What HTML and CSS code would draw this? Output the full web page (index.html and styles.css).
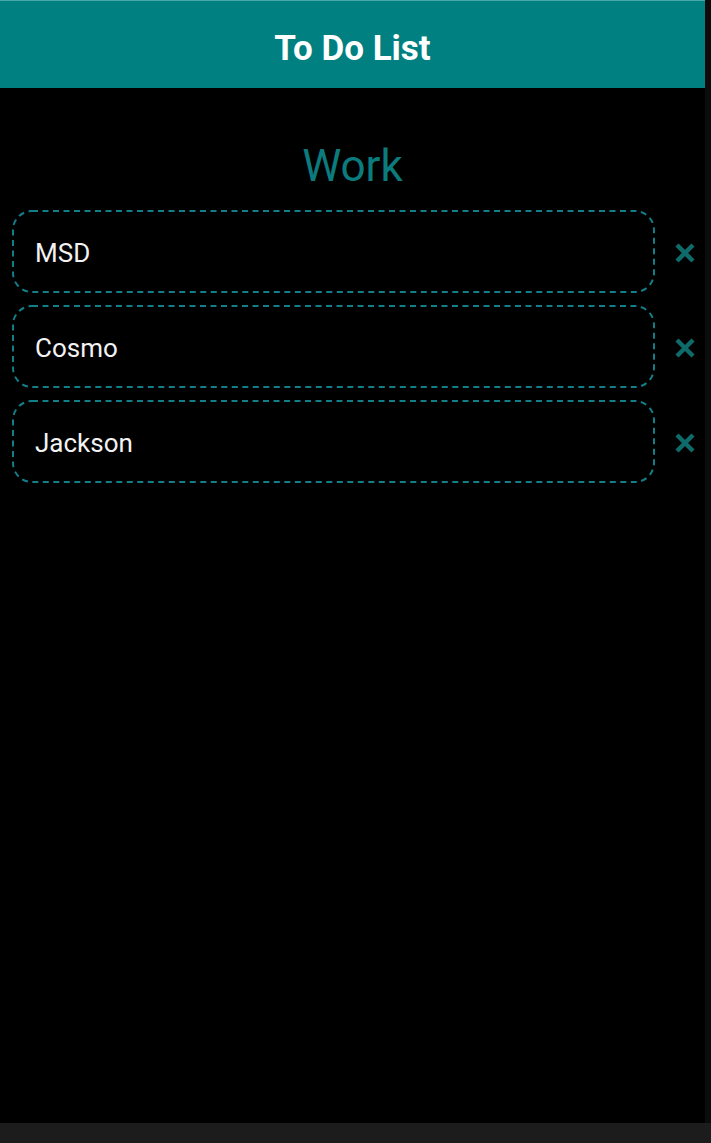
FILE: index.html
```html
<!DOCTYPE html>
<html>
<head>
<meta charset="utf-8">
<link rel="stylesheet" href="styles.css">
</head>
<body>
<div class="screen">
  <header class="appbar">
    <h1 class="appbar-title">To Do List</h1>
  </header>
  <main class="content">
    <h2 class="list-title">Work</h2>
    <ul class="items">
      <li class="item">
        <div class="item-box">
          <svg class="item-border" width="643" height="83"><rect x="1" y="1" width="641" height="81" rx="19" ry="19"/></svg>
          <span class="item-text">MSD</span>
        </div>
        <button class="remove" aria-label="Delete"><svg viewBox="0 0 22 22" width="22" height="22"><path d="M3 3 L19 19 M19 3 L3 19" stroke="currentColor" stroke-width="4.5"/></svg></button>
      </li>
      <li class="item">
        <div class="item-box">
          <svg class="item-border" width="643" height="83"><rect x="1" y="1" width="641" height="81" rx="19" ry="19"/></svg>
          <span class="item-text">Cosmo</span>
        </div>
        <button class="remove" aria-label="Delete"><svg viewBox="0 0 22 22" width="22" height="22"><path d="M3 3 L19 19 M19 3 L3 19" stroke="currentColor" stroke-width="4.5"/></svg></button>
      </li>
      <li class="item">
        <div class="item-box">
          <svg class="item-border" width="643" height="83"><rect x="1" y="1" width="641" height="81" rx="19" ry="19"/></svg>
          <span class="item-text">Jackson</span>
        </div>
        <button class="remove" aria-label="Delete"><svg viewBox="0 0 22 22" width="22" height="22"><path d="M3 3 L19 19 M19 3 L3 19" stroke="currentColor" stroke-width="4.5"/></svg></button>
      </li>
    </ul>
  </main>
</div>
</body>
</html>
```
FILE: styles.css
```css
html, body {
  margin: 0;
  padding: 0;
  background: #1c1c1c;
  height: 100%;
}
body {
  width: 711px;
  height: 1143px;
  overflow: hidden;
  font-family: Roboto, "Liberation Sans", sans-serif;
}
.screen {
  width: 705px;
  height: 1123px;
  background: #000;
  display: flex;
  flex-direction: column;
  border-right: 6px solid #0c0c0c;
}
.appbar {
  height: 88px;
  background: #008080;
  border-top: 1px solid #4aa6a6;
  box-sizing: border-box;
  display: flex;
  align-items: center;
  justify-content: center;
  padding-top: 8px;
}
.appbar-title {
  margin: 0;
  color: #fff;
  font-weight: 700;
  font-size: 35px;
  line-height: 40px;
}
.content {
  padding: 52px 0 0 12px;
}
.list-title {
  margin: 0 0 18px;
  text-align: center;
  color: #0b7b7d;
  font-weight: 400;
  font-size: 44px;
  line-height: 52px;
  padding-right: 12px;
}
.items {
  list-style: none;
  margin: 0;
  padding: 0;
  display: flex;
  flex-direction: column;
  gap: 12px;
}
.item {
  display: flex;
  align-items: center;
}
.item-box {
  position: relative;
  width: 643px;
  height: 83px;
  box-sizing: border-box;
  display: flex;
  align-items: center;
  padding: 3px 0 0 23px;
  color: #f2f2f2;
  font-size: 26px;
}
.item-border {
  position: absolute;
  left: 0;
  top: 0;
  fill: none;
  stroke: #137e88;
  stroke-width: 2;
  stroke-dasharray: 6 4.5;
}
.item-text {
  position: relative;
}
.remove {
  margin-left: 19px;
  margin-top: 2px;
  padding: 0;
  border: 0;
  background: none;
  color: #0e6b6a;
  width: 22px;
  height: 22px;
  display: flex;
}
```
